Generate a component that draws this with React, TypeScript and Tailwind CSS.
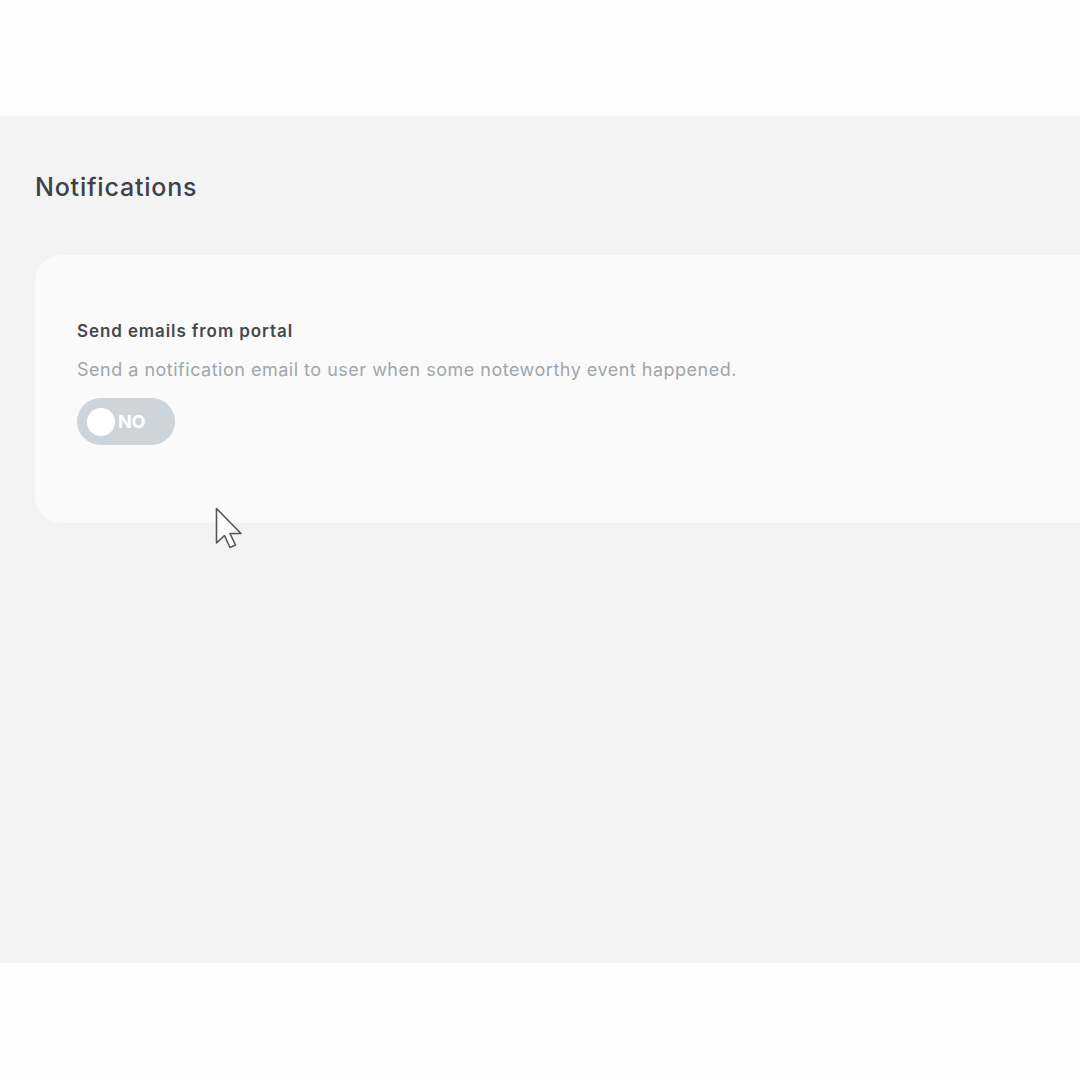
import React from 'react';

// 通知设置页
const Toggle = () => (
  <div className="flex items-center w-[98px] h-[47px] rounded-full bg-[#cdd5db] pl-[10px] gap-[3px]">
    <span className="w-[28px] h-[28px] rounded-full bg-white" />
    <span className="text-white font-bold text-[18px] tracking-[-0.3px]">NO</span>
  </div>
);

const Cursor = () => (
  <svg width="32" height="46" viewBox="0 0 32 46" className="absolute left-[214px] top-[506px]">
    <path
      d="M2.5 2.5 L2.5 37 L10.5 29.5 L16 41.5 L21.5 39 L16 27.5 L27 27.5 Z"
      fill="#ffffff"
      stroke="#555"
      strokeWidth="1.6"
      strokeLinejoin="round"
    />
  </svg>
);

export default function App() {
  return (
    <div className="relative w-[1080px] h-[1080px] overflow-hidden bg-[#fefefe] font-['Inter',sans-serif]">
      <div className="h-[116px]" />
      <div className="h-[847px] bg-[#f3f3f3] pl-[35px] pt-[56px]">
        <h1 className="text-[25px] font-medium text-[#3d4246] leading-[30px] tracking-[0.8px]">Notifications</h1>
        <div className="mt-[53px] h-[268px] rounded-l-[26px] bg-[#fafafa] pl-[42px] pt-[65px]">
          <div className="text-[17px] font-semibold text-[#45494c] leading-[22px] tracking-[0.9px]">Send emails from portal</div>
          <div className="mt-[17px] text-[18px] text-[#a1a6aa] leading-[22px] tracking-[0.5px]">
            Send a notification email to user when some noteworthy event happened.
          </div>
          <div className="mt-[17px]">
            <Toggle />
          </div>
        </div>
      </div>
      <Cursor />
    </div>
  );
}
